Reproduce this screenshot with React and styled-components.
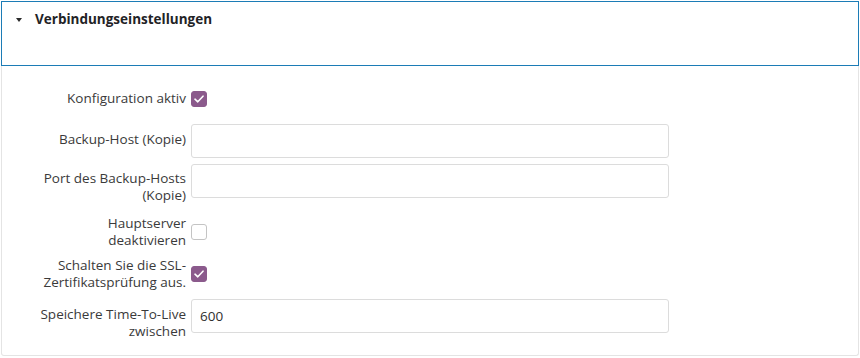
import React from "react";
import styled, { createGlobalStyle } from "styled-components";

const GlobalStyle = createGlobalStyle`
  html, body {
    margin: 0;
    padding: 0;
    background: #ffffff;
  }
  body {
    font-family: "Open Sans", "Noto Sans", sans-serif;
    font-size: 13.5px;
    color: #3a3a3a;
  }
`;

const Page = styled.div`
  padding: 1px 1px 0 1px;
  width: 858px;
`;

const Header = styled.div`
  height: 63px;
  border: 1px solid #1c7cb6;
  display: flex;
  align-items: flex-start;
  padding: 0 0 0 14px;
`;

const Title = styled.h3`
  margin: 7px 0 0 0;
  display: flex;
  align-items: center;
  gap: 13px;
  font-size: 13.5px;
  font-weight: 700;
  color: #1f2326;
  line-height: 20px;
`;

const Caret = styled.span`
  display: inline-block;
  width: 0;
  height: 0;
  border-left: 3.5px solid transparent;
  border-right: 3.5px solid transparent;
  border-top: 4px solid #2b2b2b;
  margin-top: 1px;
`;

const Body = styled.div`
  border: 1px solid #e4e4e4;
  border-top: none;
  border-radius: 0 0 3px 3px;
  height: 290px;
  padding-top: 24px;
  box-sizing: border-box;
`;

const Row = styled.div`
  display: grid;
  grid-template-columns: 184px 478px;
  column-gap: 5px;
  align-items: ${(p) => (p.$check ? "center" : "start")};
  margin-top: ${(p) => p.$top || 0}px;
`;

const Label = styled.label`
  text-align: right;
  line-height: 17.5px;
  color: #3a3a3a;
  padding-top: ${(p) => p.$pad || 0}px;
`;

const Input = styled.input`
  box-sizing: border-box;
  width: 478px;
  height: 34px;
  border: 1px solid #dcdcdc;
  border-radius: 3px;
  padding: 0 8px;
  font-family: inherit;
  font-size: 13.5px;
  color: #2f2f2f;
  outline: none;
`;

const Box = styled.span`
  box-sizing: border-box;
  width: 16px;
  height: 16px;
  border-radius: 3px;
  border: 1px solid ${(p) => (p.$on ? "#8b5a8c" : "#c4c4c4")};
  background: ${(p) => (p.$on ? "#8b5a8c" : "#ffffff")};
  display: flex;
  align-items: center;
  justify-content: center;
`;

const Check = ({ on }) => (
  <Box $on={on}>
    {on && (
      <svg width="10" height="8" viewBox="0 0 10 8">
        <path d="M1 4.2 L3.8 6.8 L9 1.2" fill="none" stroke="#fff" strokeWidth="1.6" strokeLinecap="round" strokeLinejoin="round" />
      </svg>
    )}
  </Box>
);

const App = () => (
  <Page>
    <GlobalStyle />
    <Header>
      <Title>
        <Caret />
        Verbindungseinstellungen
      </Title>
    </Header>
    <Body>
      <Row $check>
        <Label>Konfiguration aktiv</Label>
        <Check on />
      </Row>
      <Row $top={16}>
        <Label $pad={7}>Backup-Host (Kopie)</Label>
        <Input defaultValue="" />
      </Row>
      <Row $top={6}>
        <Label $pad={6}>Port des Backup-Hosts (Kopie)</Label>
        <Input defaultValue="" />
      </Row>
      <Row $check $top={10}>
        <Label>
          Hauptserver
          <br />
          deaktivieren
        </Label>
        <Check />
      </Row>
      <Row $check $top={7}>
        <Label>
          Schalten Sie die SSL-
          <br />
          Zertifikatsprüfung aus.
        </Label>
        <Check on />
      </Row>
      <Row $top={7}>
        <Label $pad={7}>Speichere Time-To-Live zwischen</Label>
        <Input defaultValue="600" />
      </Row>
    </Body>
  </Page>
);

export default App;
